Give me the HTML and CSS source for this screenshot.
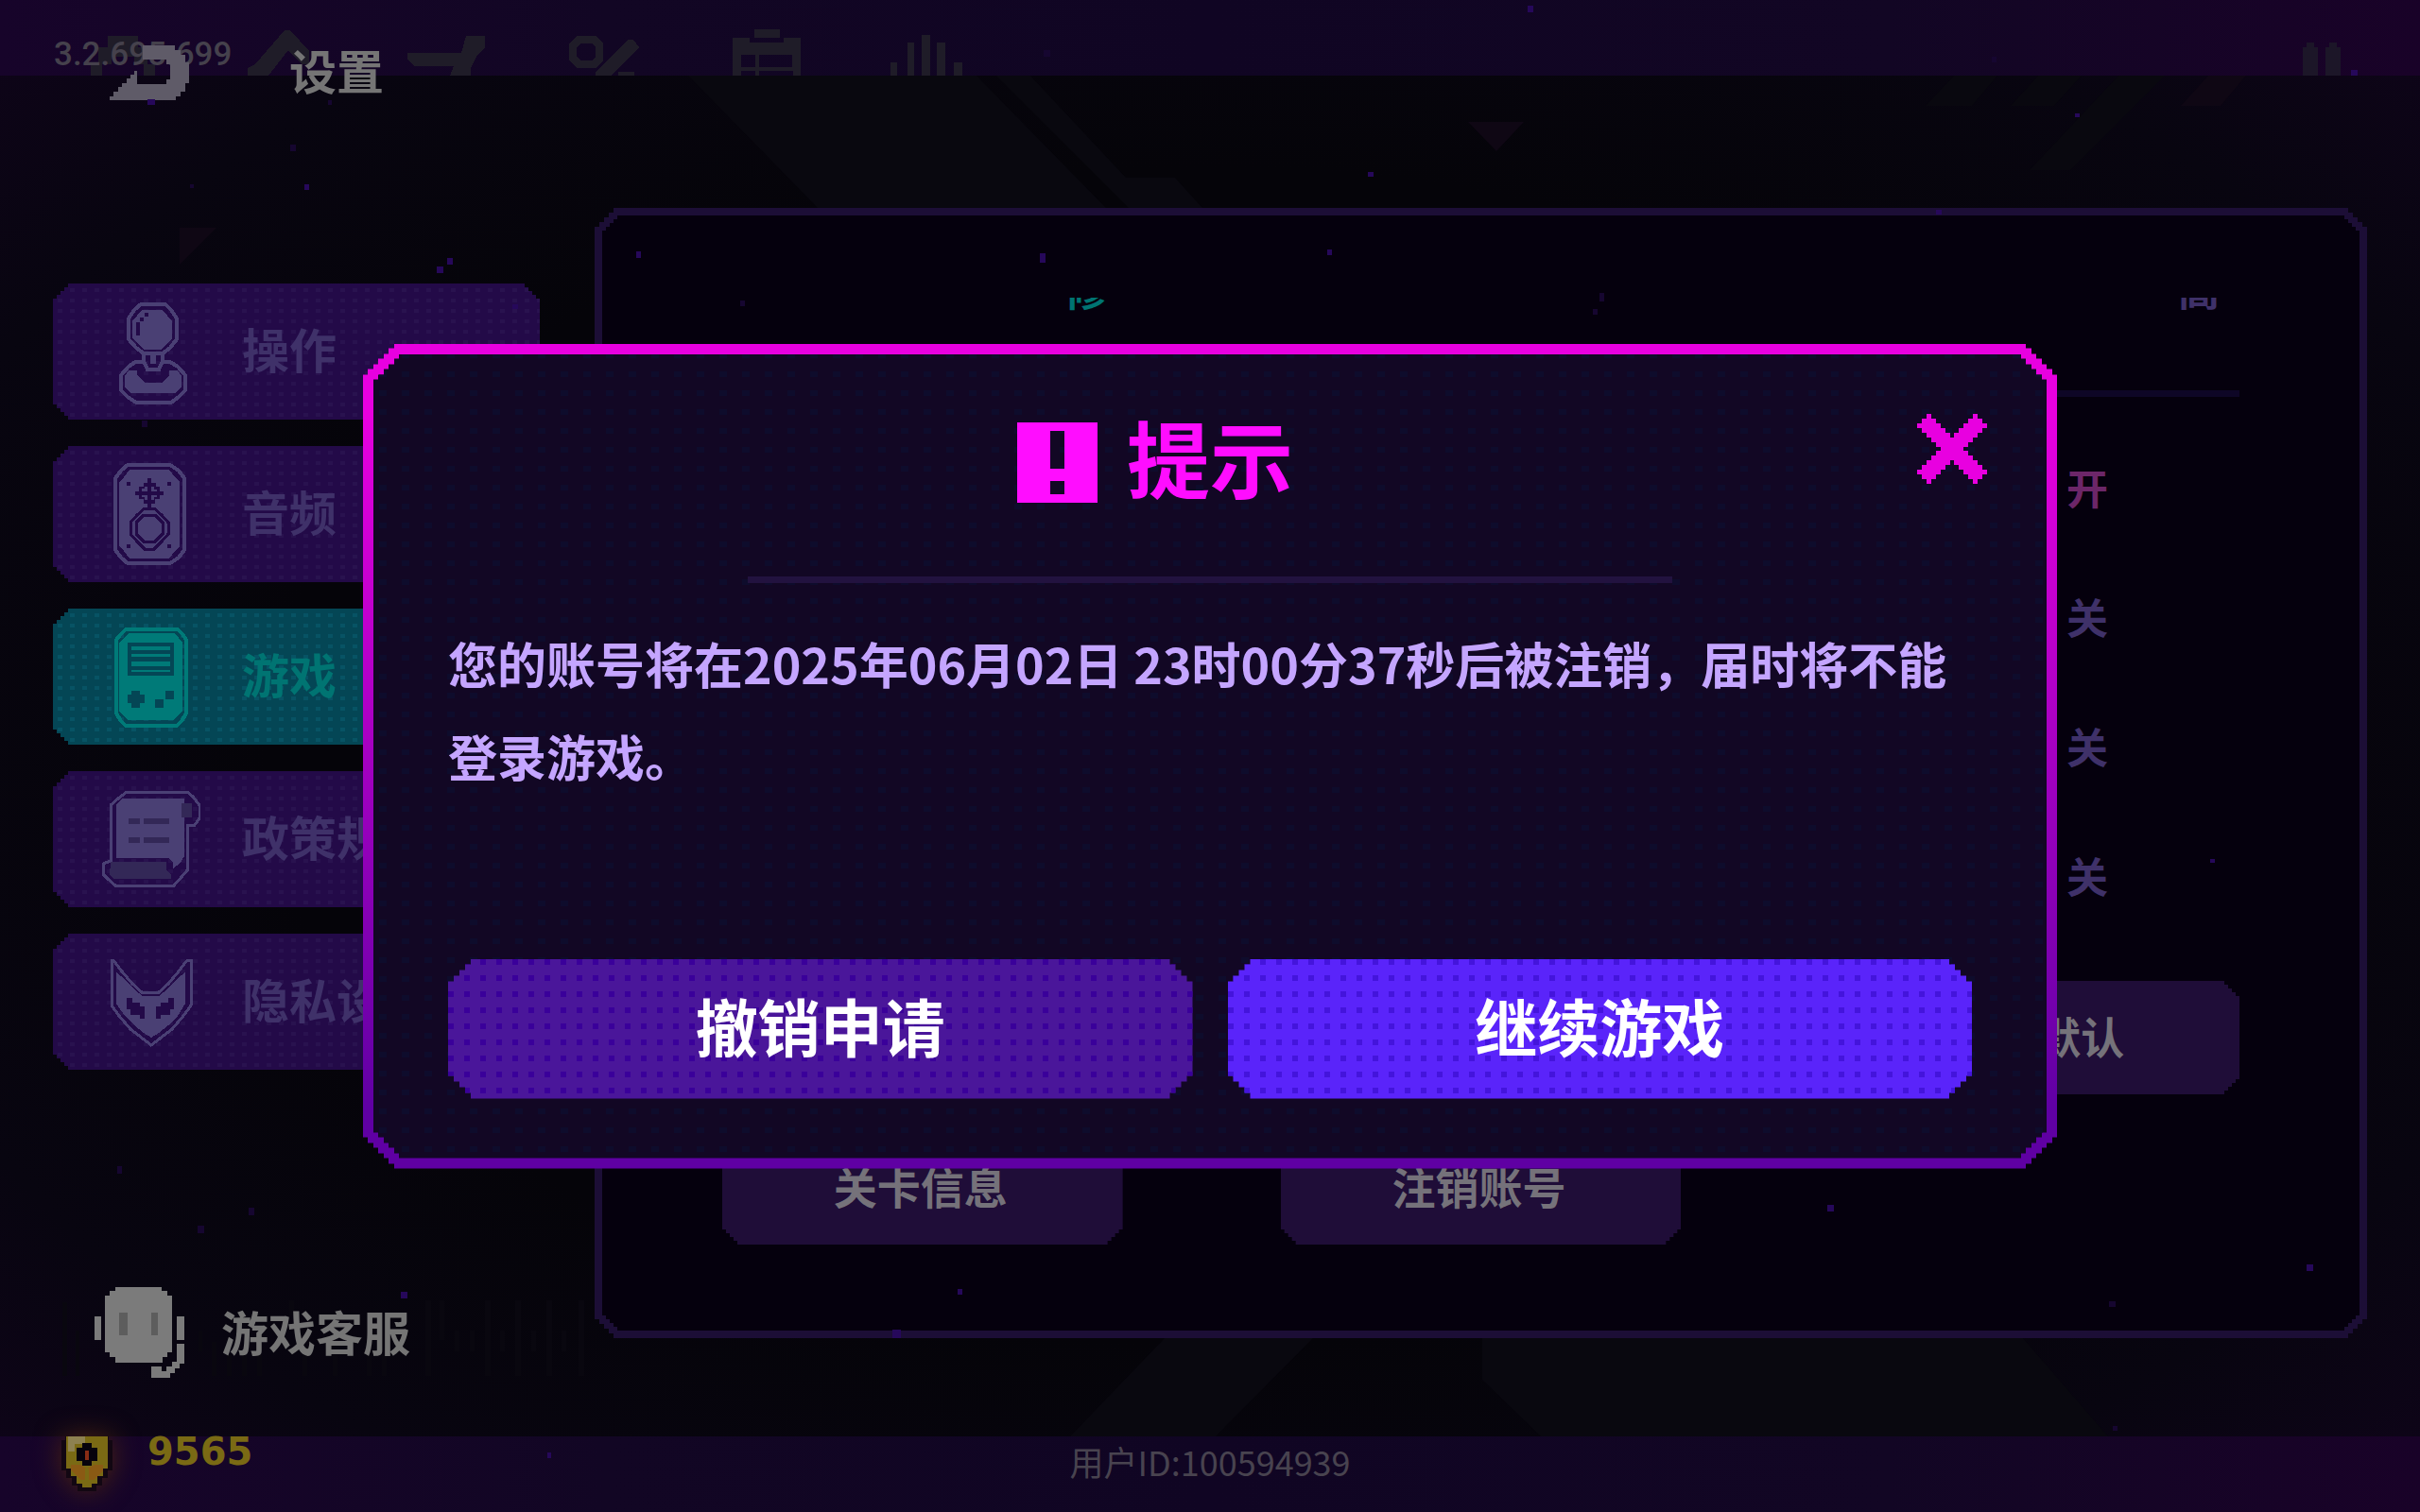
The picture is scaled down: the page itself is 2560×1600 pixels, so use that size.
FILE: index.html
```html
<!DOCTYPE html>
<html lang="zh-CN">
<head>
    <meta charset="UTF-8">
    <meta name="viewport" content="width=device-width, initial-scale=1.0">
    <title>设置</title>
    <link rel="stylesheet" href="styles.css">
</head>
<body>
    <!-- 底层 HUD -->
    <div class="hud">
        <div class="hud-top">
            <span class="version">3.2.695.699</span>
            <svg class="hud-icons" viewBox="0 0 960 80" width="960" height="80" fill="#1f1c28" shape-rendering="crispEdges">
                <path d="M0 80V68h8V50h10V38h32v12h10v18h8v12h-12V68H46v-8H22v8H12v12z" transform="translate(96 0)"/>
                <path d="M262 80V72l8-4 31-36h6l20 22v14h-8l-14-15-21 27z"/>
                <path d="M431 56h57l5-18h20v12l-8 8-7 14v8h-22l4-10h-42l-7-8z"/>
                <path d="M610 38h20l8 8v18l-8 8h-20l-8-8V46zM614 46l-4 4v10l4 4h12l4-4V50l-4-4z" fill-rule="evenodd"/>
                <path d="M664 42h6l6 8-30 30h-16v-4zM654 76h17v4h-17z"/>
                <path d="M798 31h27v9h-27zM775 40h18v5h36v-5h18v40h-8v-5h-36v5h-4v-5h-15v5h-9zM784 58v13h15V58zM803 58v13h35V58z" fill-rule="evenodd"/>
                <path d="M942 66h7v14h-7z"/>
            </svg>
            <svg class="hud-bars" viewBox="0 0 60 80" width="60" height="80" fill="#1f1c28" shape-rendering="crispEdges">
                <path d="M-2 45h9v35h-9zM15 37h9v43h-9zM31 45h9v35h-9zM49 66h9v14h-9z"/>
            </svg>
            <svg class="hud-pause" viewBox="0 0 40 80" width="40" height="80" fill="#1c1628" shape-rendering="crispEdges">
                <path d="M0 50h4v-5h8v5h4v30H0zM24 50h4v-5h8v5h4v30H24z"/>
            </svg>
        </div>
        <div class="hud-bottom">
            <svg class="coin" viewBox="0 0 54 58" width="54" height="58" shape-rendering="crispEdges">
                <path fill="#120712" d="M0 4h4V0h46v4h4v32h-5v8h-6v8h-6v6H17v-6h-6v-8H5v-8H0z"/>
                <path fill="#7a6a14" d="M5 0h44v34h-5v8h-6v8h-6v4H22v-4h-6v-8h-6v-8H5z"/>
                <path fill="#8d8150" d="M7 0h18v8H14v8H7z"/>
                <path fill="#8a5a14" d="M10 30h10l7 4 8-4h9v6l-10 10h-14L10 36z"/>
                <path fill="#7a6a14" d="M25 34h4v16h-4z"/>
                <path fill="#07030c" d="M22 7h10v5h6v14h-6v5H22v-5h-6V12h6z"/>
                <path fill="#8a2c14" d="M25 15h4v10h-4z"/>
            </svg>
            <span class="coins">9565</span>
            <span class="user-id">用户ID:100594939</span>
        </div>
    </div>

    <!-- 背景装饰与粒子 -->
    <svg class="backdrop" viewBox="0 0 2560 1600" preserveAspectRatio="none" aria-hidden="true">
        <g fill="#09080f">
            <path d="M728 80h305l137 140H865zM1054 80h36l101 108h52l29 32h-78z"/>
            <path d="M2067 80h46l-27 32h-49zM2156 80h46l-29 32h-46zM2241 80h49l-100 100h-43z"/>
            <path d="M1232 1416h157l-103 104h-154zM1568 1416h572l90 104h-600l-62-60z"/>
        </g>
        <path fill="#0f0714" d="M190 241h39l-39 39zM1553 129h59l-29 31zM2336 80h40l-27 32h-42z"/>
        <g fill="#09070f">
            <path d="M66 1378h5v78h-5zM80 1408h4v48h-4zM210 1408h4v22h-4zM224 1420h5v36h-5zM240 1434h5v22h-5zM256 1434h5v22h-5zM272 1434h5v22h-5zM306 1376h5v16h-5zM320 1434h5v22h-5zM352 1434h5v22h-5zM388 1434h5v22h-5zM404 1434h5v22h-5z"/>
            <path d="M450 1376h6v80h-6zM465 1376h5v42h-5zM481 1408h5v22h-5zM497 1408h5v22h-5zM513 1376h6v80h-6zM529 1408h5v22h-5zM545 1376h6v80h-6zM562 1408h5v22h-5zM578 1376h6v80h-6zM594 1408h5v22h-5zM612 1376h6v80h-6z"/>
        </g>
    </svg>

    <!-- 设置界面 -->
    <div class="settings">
        <header class="page-head">
            <button class="back" aria-label="返回">
                <svg viewBox="0 0 84 58" width="84" height="58" fill="#5f5b68" shape-rendering="crispEdges">
                    <path d="M35 0h34v5h6v5h5v8h4v22h-4v9h-5v5h-5v4H0v-4h4v-5h5v-5h4v-4h5v-5h4v-4h4v-4h3v14h31v-5h4V20h-4v-5H35z"/>
                </svg>
            </button>
            <h1>设置</h1>
        </header>
        <div class="settings-body">
            <aside class="side">
                <nav class="menu">
                    <button class="menu-item">
                        <svg viewBox="0 0 104 120" width="104" height="120" shape-rendering="crispEdges">
                            <g fill="none" stroke="currentColor" stroke-width="4">
                                <path d="M41 10h26l6 6 6 9v22l-7 9-8 6H44l-8-6-8-9V25l6-9z"/>
                                <path d="M44 62v9h-9l-7 5-8 9v16l7 7 9 6h37l8-6 7-7V85l-8-9-8-5h-8v-9"/>
                                <path d="M44 70l4 9h12l4-9"/>
                            </g>
                            <path fill="currentColor" d="M42 16h22l5 6 5 6v18l-6 6-6 6H44l-6-6-6-6V28l5-6zM51 61h6v12h-6zM28 80h9v5l8 8h18l8-8v-5h9l4 6v12l-7 6H31l-7-6V86z"/>
                            <path fill="#230a48" d="M45 19h4v4h-4zM40 24h4v4h-4zM36 29h4v14h-4z"/>
                        </svg>
                        <span>操作</span>
                    </button>
                    <button class="menu-item">
                        <svg viewBox="0 0 104 120" width="104" height="120" shape-rendering="crispEdges">
                            <path fill="none" stroke="currentColor" stroke-width="4" d="M27 8h45l9 6 6 8v76l-6 8-9 6H27l-7-6-6-8V22l6-8z"/>
                            <path fill="currentColor" d="M29 13h42l6 8 5 5v68l-5 5-6 8H29l-6-8-5-5V26l5-5z"/>
                            <path fill="#230a48" d="M48 22h4v5h5v4h4v5h4v4h-4v4h-5v5h-4v4h-4v-4h-4v-5h-5v-4h-4v-4h4v-5h5v-4h4zM26 26h4v4h-4zM69 26h4v4h-4zM26 92h4v4h-4zM69 92h4v4h-4z"/>
                            <path fill="currentColor" d="M45 31h3v5h-6v-3h3zM52 31h3v3h3v2h-6zM42 40h6v5h-3v-3h-3zM52 40h6v2h-3v3h-3z"/>
                            <path fill="none" stroke="#230a48" stroke-width="3" d="M45 54h10l8 7 7 8v12l-7 8-8 8H45l-8-8-7-8V69l7-8z"/>
                            <path fill="none" stroke="#230a48" stroke-width="3" d="M44 61h12l8 8v12l-8 8H44l-8-8V69z"/>
                        </svg>
                        <span>音频</span>
                    </button>
                    <button class="menu-item active">
                        <svg viewBox="0 0 104 120" width="104" height="120" shape-rendering="crispEdges">
                            <path fill="none" stroke="currentColor" stroke-width="4" d="M25 10h55l5 5 4 6v78l-5 8-5 5H25l-5-5-5-8V21l5-6z"/>
                            <path fill="currentColor" d="M28 14h48l5 5 4 5v72l-5 6-5 4H28l-5-4-5-6V24l5-5z"/>
                            <path fill="#044655" d="M27 24h49v35H27zM31 75h9v4h5v9h-5v5h-9v-5h-4v-9h4zM67 75h9v9h-9zM56 84h9v9h-9z"/>
                            <path fill="currentColor" d="M31 28h41v4H31zM31 36h41v3H31zM31 44h41v5H31zM31 53h41v2H31z"/>
                        </svg>
                        <span>游戏</span>
                    </button>
                    <button class="menu-item">
                        <svg viewBox="0 0 104 120" width="104" height="120" shape-rendering="crispEdges">
                            <path fill="none" stroke="currentColor" stroke-width="3" d="M26 10h64l6 5 7 9v14l-5 7h-8v48l-6 7-8 9H14l-8-7-5-5V86l8-3V24l8-7z"/>
                            <path fill="currentColor" d="M21 17h66v61l-5 8-7 5v-6l-5-5H15V23z"/>
                            <path fill="#332857" d="M84 22h11v15H84zM28 38h12v6H28zM44 38h27v6H44zM28 58h12v6H28zM44 58h27v6H44zM9 84h59v8l5 6v4H12l-4-4z"/>
                        </svg>
                        <span>政策规范</span>
                    </button>
                    <button class="menu-item">
                        <svg viewBox="0 0 104 120" width="104" height="120" shape-rendering="crispEdges">
                            <path fill="none" stroke="currentColor" stroke-width="3" d="M12 16l9 12 11 13 10 9h18l10-9 11-13 9-12h4v48l-8 11-12 14-13 10-9 7-9-7-13-10-12-14-8-11V16z"/>
                            <path fill="currentColor" d="M15 29l9 7 10 11 9 7h17l9-7 10-11 9-7v33l-8 13-10 10-10 8-8 5-8-5-10-8-10-10-9-13z"/>
                            <path fill="#230a48" d="M26 56h6v5h8v4h5v13h-5v-4H30v-6h-4zM76 56h-6v5h-8v4h-5v13h5v-4h10v-6h4z"/>
                        </svg>
                        <span>隐私设置</span>
                    </button>
                </nav>
                <button class="service">
                    <svg viewBox="0 0 96 96" width="96" height="96" fill="#7b7b7b" shape-rendering="crispEdges">
                        <path d="M22 0h49v4h6v5h5v60h-5v5h-5v6H22v-6h-6v-5h-5V9h5V4h6z"/>
                        <path d="M0 31h7v25H0zM87 31h8v25h-8zM87 60h8v21h-5v5h-5v5h-5v5H60V84h11v5h5v-5h6v-5h5z"/>
                        <path fill="#5d5d5d" d="M26 27h9v24h-9zM60 27h7v24h-7z"/>
                    </svg>
                    <span>游戏客服</span>
                </button>
            </aside>
            <main class="panel">
                <div class="row row-clipped"><span class="picked">修</span><span>高</span></div>
                <hr class="rule">
                <div class="row"><span class="on">开</span></div>
                <div class="row"><span>关</span></div>
                <div class="row"><span>关</span></div>
                <div class="row"><span>关</span></div>
                <div class="actions">
                    <button class="action last">恢复默认</button>
                    <button class="action">关卡信息</button>
                    <button class="action">注销账号</button>
                </div>
            </main>
        </div>
    </div>

    <svg class="backdrop" viewBox="0 0 2560 1600" preserveAspectRatio="none" fill="#26085a" shape-rendering="crispEdges" aria-hidden="true">
        <path d="M156 105h8v6h-8zM322 195h5v6h-5zM473 273h6v7h-6zM462 282h7v7h-7zM542 322h6v5h-6zM1616 6h6v7h-6zM1447 182h6v5h-6zM1100 268h6v10h-6zM1404 264h5v6h-5zM673 266h5v7h-5zM424 1367h7v7h-7zM944 1407h9v9h-9zM1013 1364h5v6h-5zM1933 1275h7v7h-7zM2440 1338h7v7h-7zM2338 909h5v4h-5zM2048 222h6v5h-6zM2195 120h5v4h-5zM2487 74h7v6h-7zM579 1537h4v6h-4z"/>
        <path fill="#160630" d="M307 153h6v7h-6zM347 106h4v5h-4zM201 195h4v4h-4zM150 445h6v7h-6zM783 318h5v6h-5zM1692 310h5v9h-5zM1685 327h5v6h-5zM1104 53h7v7h-7zM2107 60h5v6h-5zM124 1234h5v8h-5zM263 1278h6v8h-6zM209 1297h7v8h-7zM2231 1377h7v6h-7zM2235 1509h5v5h-5z"/>
    </svg>

    <!-- 提示弹窗 -->
    <div class="overlay">
        <section class="modal" role="dialog" aria-labelledby="tipTitle">
            <header class="modal-head">
                <div class="modal-title">
                    <svg viewBox="0 0 85 85" width="85" height="85" shape-rendering="crispEdges">
                        <path fill="#ff0dff" fill-rule="evenodd" d="M0 0h85v85H0zM35 9v40h15V9zM35 62v14h15V62z"/>
                    </svg>
                    <h2 id="tipTitle">提示</h2>
                </div>
                <button class="close" aria-label="关闭">
                    <svg viewBox="0 0 15 15" width="74" height="74" fill="#e800e0" shape-rendering="crispEdges">
                        <path id="arm" d="M2 0h1v1h-1zM1 1h3v1h-3zM0 2h5v1h-5zM1 3h5v1h-5zM2 4h5v1h-5zM3 5h5v1h-5zM4 6h5v1h-5zM5 7h5v1h-5zM6 8h5v1h-5zM7 9h5v1h-5zM8 10h5v1h-5zM9 11h5v1h-5zM10 12h5v1h-5zM11 13h3v1h-3zM12 14h1v1h-1z"/>
                        <use href="#arm" transform="matrix(-1 0 0 1 15 0)"/>
                    </svg>
                </button>
            </header>
            <hr class="modal-rule">
            <p class="message">您的账号将在2025年06月02日 23时00分37秒后被注销，届时将不能登录游戏。</p>
            <div class="modal-actions">
                <button class="btn">撤销申请</button>
                <button class="btn primary">继续游戏</button>
            </div>
        </section>
    </div>
</body>
</html>
```

FILE: styles.css
```css
* {
    box-sizing: border-box;
}
body {
    margin: 0;
    min-height: 100vh;
    position: relative;
    overflow: hidden;
    background: radial-gradient(ellipse at center, #050409 55%, #080510 80%, #0f041a 100%);
    color: #757575;
    font-family: "Noto Sans CJK SC", "Noto Sans", sans-serif;
}
button {
    border: none;
    padding: 0;
    background: none;
    color: inherit;
    font: inherit;
    cursor: pointer;
}
svg {
    display: block;
    flex: none;
}
h1, h2, p, hr {
    margin: 0;
}

/* 像素阶梯切角，--s 为每一级的大小 */
.menu-item, .action, .btn, .panel, .panel::before {
    --s: 4px;
    clip-path: polygon(
        0 calc(var(--s) * 4), var(--s) calc(var(--s) * 4), var(--s) calc(var(--s) * 3), calc(var(--s) * 2) calc(var(--s) * 3), calc(var(--s) * 2) calc(var(--s) * 2), calc(var(--s) * 3) calc(var(--s) * 2), calc(var(--s) * 3) var(--s), calc(var(--s) * 4) var(--s), calc(var(--s) * 4) 0,
        calc(100% - var(--s) * 4) 0, calc(100% - var(--s) * 4) var(--s), calc(100% - var(--s) * 3) var(--s), calc(100% - var(--s) * 3) calc(var(--s) * 2), calc(100% - var(--s) * 2) calc(var(--s) * 2), calc(100% - var(--s) * 2) calc(var(--s) * 3), calc(100% - var(--s)) calc(var(--s) * 3), calc(100% - var(--s)) calc(var(--s) * 4), 100% calc(var(--s) * 4),
        100% calc(100% - var(--s) * 4), calc(100% - var(--s)) calc(100% - var(--s) * 4), calc(100% - var(--s)) calc(100% - var(--s) * 3), calc(100% - var(--s) * 2) calc(100% - var(--s) * 3), calc(100% - var(--s) * 2) calc(100% - var(--s) * 2), calc(100% - var(--s) * 3) calc(100% - var(--s) * 2), calc(100% - var(--s) * 3) calc(100% - var(--s)), calc(100% - var(--s) * 4) calc(100% - var(--s)), calc(100% - var(--s) * 4) 100%,
        calc(var(--s) * 4) 100%, calc(var(--s) * 4) calc(100% - var(--s)), calc(var(--s) * 3) calc(100% - var(--s)), calc(var(--s) * 3) calc(100% - var(--s) * 2), calc(var(--s) * 2) calc(100% - var(--s) * 2), calc(var(--s) * 2) calc(100% - var(--s) * 3), var(--s) calc(100% - var(--s) * 3), var(--s) calc(100% - var(--s) * 4), 0 calc(100% - var(--s) * 4)
    );
}

/* HUD */
.hud {
    position: absolute;
    inset: 0;
    display: flex;
    flex-direction: column;
    justify-content: space-between;
}
.hud-top, .hud-bottom {
    position: relative;
    height: 80px;
    display: flex;
    background: linear-gradient(90deg, #17042a, #120624 25%, #100523 50%, #120624 78%, #190228);
}
.version {
    position: absolute;
    left: 57px;
    top: 36px;
    font: 500 35px/44px Roboto, sans-serif;
    color: #45414c;
}
.hud-pause {
    margin: 0 84px 0 auto;
}
.hud-bottom {
    align-items: flex-start;
    padding-left: 65px;
}
.coin {
    filter: drop-shadow(0 0 14px #4a2410);
}
.coins {
    margin-left: 37px;
    font: bold 40px/32px "DejaVu Sans", sans-serif;
    color: #7a6a14;
}
.user-id {
    position: absolute;
    left: 0;
    right: 0;
    top: 6px;
    text-align: center;
    font-size: 36px;
    line-height: 40px;
    color: #48434f;
}
.backdrop {
    position: absolute;
    inset: 0;
    width: 100%;
    height: 100%;
    pointer-events: none;
}

/* 设置 */
.settings {
    position: relative;
    padding: 44px 56px 0;
}
.page-head {
    display: flex;
    align-items: center;
    gap: 106px;
    height: 66px;
    padding-left: 60px;
}
h1 {
    padding-bottom: 8px;
    font-size: 50px;
    line-height: 58px;
    font-weight: bold;
}
.settings-body {
    display: flex;
    align-items: flex-start;
    gap: 58px;
    margin-top: 110px;
}
.side {
    width: 515px;
    margin-top: 80px;
    display: flex;
    flex-direction: column;
    gap: 230px;
}
.menu {
    display: flex;
    flex-direction: column;
    gap: 28px;
}
.menu-item {
    display: flex;
    align-items: center;
    gap: 44px;
    height: 144px;
    padding-left: 52px;
    background: conic-gradient(at 5px 4px, transparent 75%, #29124f 0) 5px 5px / 13px 11px, #230a48;
    font-size: 50px;
    font-weight: bold;
    color: #4a4074;
    white-space: nowrap;
}
.menu-item span {
    padding-bottom: 8px;
    color: #3f3169;
}
.menu-item.active {
    background: conic-gradient(at 5px 4px, transparent 75%, #075364 0) 5px 5px / 13px 11px, #044655;
    color: #007a78;
}
.menu-item.active span {
    color: #007472;
}
.service {
    display: flex;
    align-items: center;
    gap: 38px;
    padding-left: 44px;
    font-size: 50px;
    line-height: 66px;
    font-weight: bold;
}
.service span {
    padding-bottom: 4px;
}
.panel {
    --s: 5px;
    flex: 1;
    position: relative;
    z-index: 0;
    padding: 95px 135px 99px;
    background: #1c0e36;
}
.panel::before {
    content: "";
    position: absolute;
    inset: 8px;
    z-index: -1;
    background: #05000d;
}
.row {
    display: flex;
    justify-content: flex-end;
    align-items: center;
    height: 137px;
    padding: 0 139px 8px 0;
    font-size: 44px;
    font-weight: bold;
    color: #3f3169;
}
.row-clipped {
    justify-content: space-between;
    align-items: flex-end;
    height: 16px;
    line-height: 52px;
    margin-bottom: 82px;
    padding: 0 21px 0 362px;
    overflow: hidden;
}
.picked {
    color: #007472;
}
.on {
    color: #6c2668;
}
.rule {
    height: 7px;
    margin-bottom: 30px;
    border: none;
    background: #0e0626;
}
.actions {
    display: grid;
    grid-template-columns: repeat(3, 1fr);
    gap: 39px 167px;
    margin-top: 40px;
}
.action {
    height: 120px;
    padding: 0 4px 6px 0;
    background: #1f0d38;
    font-size: 46px;
    font-weight: bold;
    color: #75727a;
}
.action.last {
    grid-column: 3;
}

/* 弹窗 */
.overlay {
    position: fixed;
    inset: 0;
    display: flex;
    align-items: center;
    justify-content: center;
}
.modal {
    clip-path: polygon(
        0 33px, 5px 33px, 5px 27px, 11px 27px, 11px 22px, 16px 22px, 16px 16px, 22px 16px, 22px 11px, 27px 11px, 27px 5px, 33px 5px, 33px 0,
        calc(100% - 33px) 0, calc(100% - 33px) 5px, calc(100% - 27px) 5px, calc(100% - 27px) 11px, calc(100% - 22px) 11px, calc(100% - 22px) 16px, calc(100% - 16px) 16px, calc(100% - 16px) 22px, calc(100% - 11px) 22px, calc(100% - 11px) 27px, calc(100% - 5px) 27px, calc(100% - 5px) 33px, 100% 33px,
        100% calc(100% - 33px), calc(100% - 5px) calc(100% - 33px), calc(100% - 5px) calc(100% - 27px), calc(100% - 11px) calc(100% - 27px), calc(100% - 11px) calc(100% - 22px), calc(100% - 16px) calc(100% - 22px), calc(100% - 16px) calc(100% - 16px), calc(100% - 22px) calc(100% - 16px), calc(100% - 22px) calc(100% - 11px), calc(100% - 27px) calc(100% - 11px), calc(100% - 27px) calc(100% - 5px), calc(100% - 33px) calc(100% - 5px), calc(100% - 33px) 100%,
        33px 100%, 33px calc(100% - 5px), 27px calc(100% - 5px), 27px calc(100% - 11px), 22px calc(100% - 11px), 22px calc(100% - 16px), 16px calc(100% - 16px), 16px calc(100% - 22px), 11px calc(100% - 22px), 11px calc(100% - 27px), 5px calc(100% - 27px), 5px calc(100% - 33px), 0 calc(100% - 33px)
    );
    position: relative;
    z-index: 0;
    width: 70%;
    padding: 74px 90px;
    background: linear-gradient(#e800e0 8%, #5f00a3 93%);
}
.modal::before {
    content: "";
    position: absolute;
    inset: 11px;
    z-index: -1;
    background: conic-gradient(at 8px 6px, transparent 75%, #0e0c2c 0) 6px 18px / 24px 20px, #120724;
    clip-path: polygon(
        0 27px, 5px 27px, 5px 22px, 11px 22px, 11px 16px, 16px 16px, 16px 11px, 22px 11px, 22px 5px, 27px 5px, 27px 0,
        calc(100% - 27px) 0, calc(100% - 27px) 5px, calc(100% - 22px) 5px, calc(100% - 22px) 11px, calc(100% - 16px) 11px, calc(100% - 16px) 16px, calc(100% - 11px) 16px, calc(100% - 11px) 22px, calc(100% - 5px) 22px, calc(100% - 5px) 27px, 100% 27px,
        100% calc(100% - 27px), calc(100% - 5px) calc(100% - 27px), calc(100% - 5px) calc(100% - 22px), calc(100% - 11px) calc(100% - 22px), calc(100% - 11px) calc(100% - 16px), calc(100% - 16px) calc(100% - 16px), calc(100% - 16px) calc(100% - 11px), calc(100% - 22px) calc(100% - 11px), calc(100% - 22px) calc(100% - 5px), calc(100% - 27px) calc(100% - 5px), calc(100% - 27px) 100%,
        27px 100%, 27px calc(100% - 5px), 22px calc(100% - 5px), 22px calc(100% - 11px), 16px calc(100% - 11px), 16px calc(100% - 16px), 11px calc(100% - 16px), 11px calc(100% - 22px), 5px calc(100% - 22px), 5px calc(100% - 27px), 0 calc(100% - 27px)
    );
}
.modal-head {
    display: flex;
    align-items: flex-start;
    gap: 58px;
    margin-right: -16px;
}
.modal-title {
    flex: 1;
    display: flex;
    justify-content: center;
    align-items: center;
    gap: 31px;
    height: 104px;
}
h2 {
    padding-bottom: 16px;
    font-size: 88px;
    line-height: 88px;
    font-weight: bold;
    color: #ff0dff;
}
.modal-rule {
    width: 978px;
    height: 7px;
    margin: 68px auto 36px;
    border: none;
    background: #22123f;
}
.message {
    min-height: 196px;
    font-size: 52px;
    line-height: 98px;
    font-weight: bold;
    color: #c4a5ff;
}
.modal-actions {
    display: grid;
    grid-template-columns: 1fr 1fr;
    gap: 37px;
    margin-top: 166px;
}
.btn {
    --s: 6px;
    height: 148px;
    padding-bottom: 10px;
    background: conic-gradient(at 6px 6px, transparent 75%, #3a009a 0) 0 0 / 17px 17px, #4a169a;
    font-size: 66px;
    font-weight: bold;
    color: #fff;
}
.btn.primary {
    background: conic-gradient(at 6px 6px, transparent 75%, #4414dc 0) 0 0 / 17px 17px, #5a24fa;
}
```
